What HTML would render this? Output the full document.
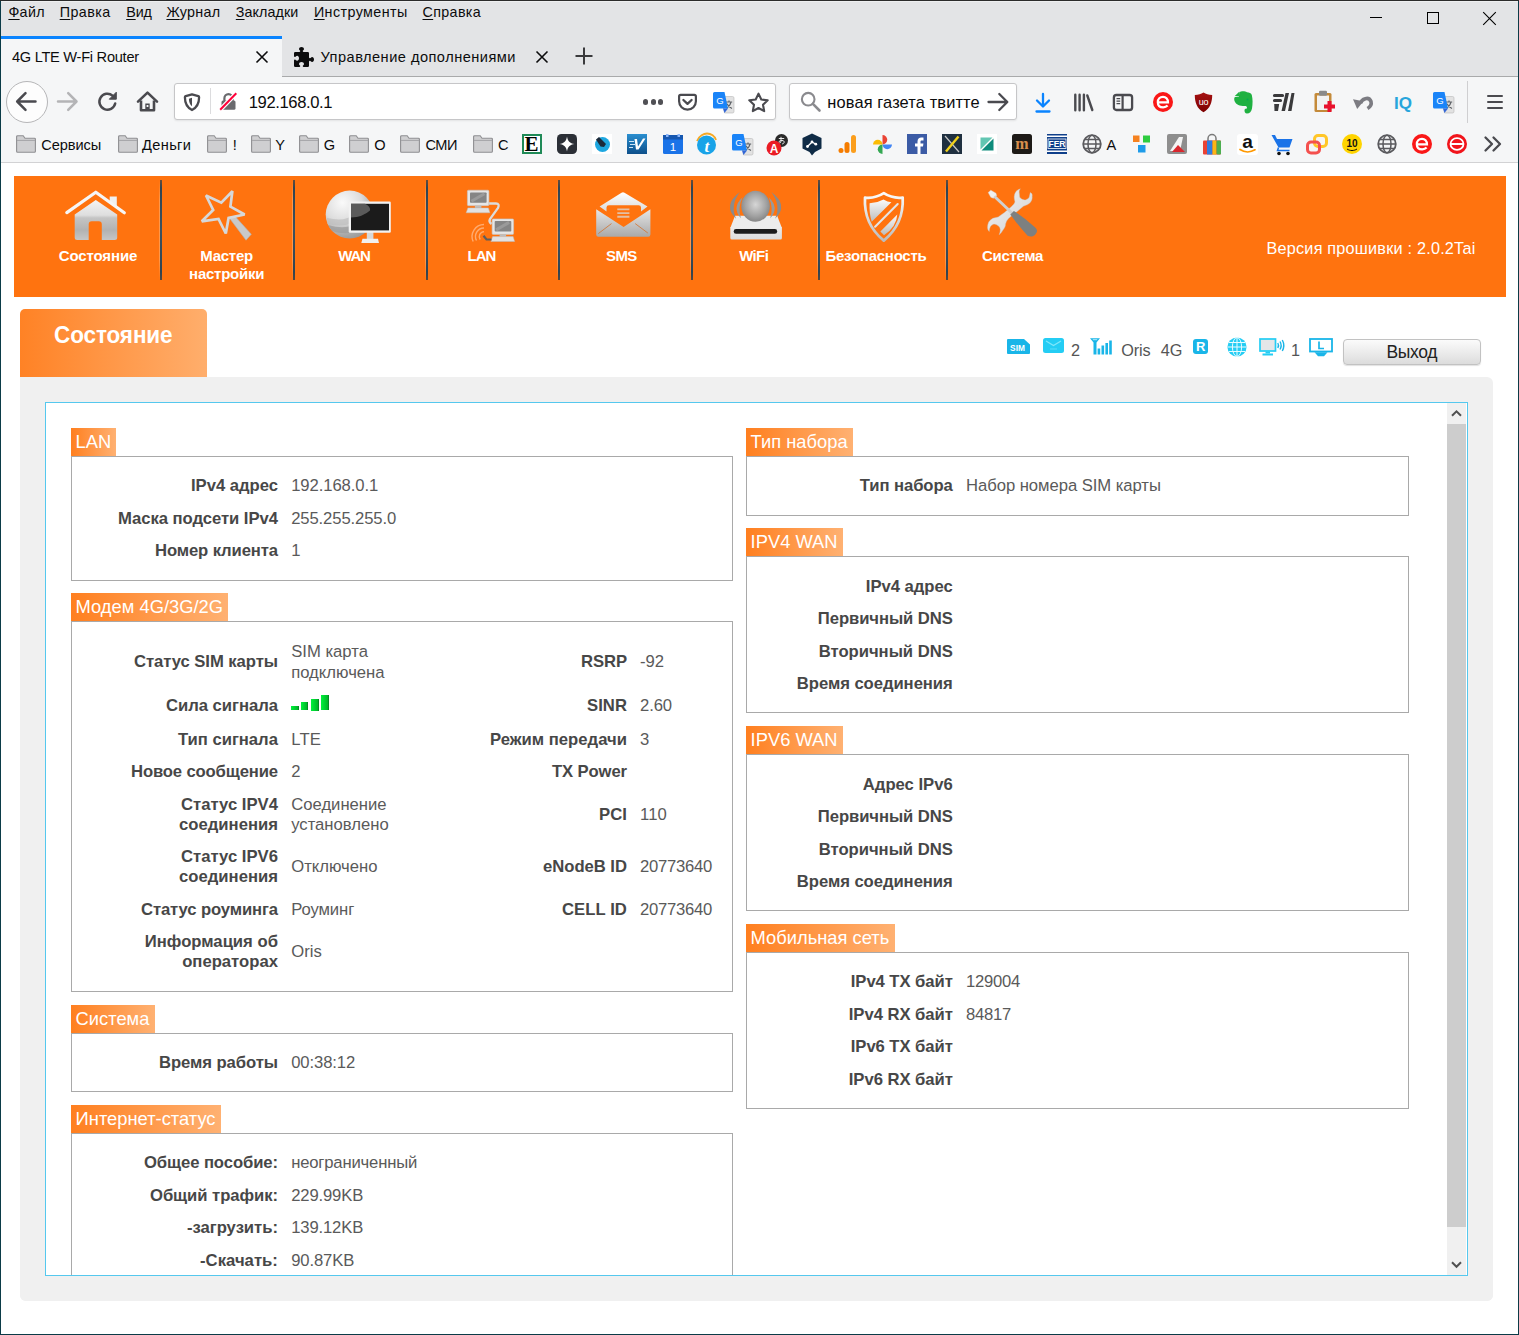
<!DOCTYPE html>
<html lang="ru"><head><meta charset="utf-8"><title>4G LTE W-Fi Router</title>
<style>
html,body{margin:0;padding:0}
body{width:1519px;height:1335px;position:relative;overflow:hidden;background:#fff;font-family:"Liberation Sans",sans-serif}
.a{position:absolute;display:block}
.t{position:absolute;white-space:nowrap;line-height:1;font-family:"Liberation Sans",sans-serif}
svg{overflow:visible}
</style></head><body>
<!-- browser chrome -->
<div class="a" style="left:0px;top:0px;width:1519px;height:77px;background:#e3e4e6;"></div>
<div class="a" style="left:0px;top:0px;width:1519px;height:1px;background:#2b2b2b;"></div>
<div class="a" style="left:0px;top:1px;width:1519px;height:1px;background:#eeeff0;"></div>
<span class="t" style="left:8.40px;top:5px;font-size:14.3px;color:#0c0c0d;letter-spacing:0.336px;"><span style="text-decoration:underline;text-underline-offset:1.500px;text-decoration-thickness:1px">Ф</span>айл</span>
<span class="t" style="left:59.70px;top:5px;font-size:14.3px;color:#0c0c0d;letter-spacing:0.466px;"><span style="text-decoration:underline;text-underline-offset:1.500px;text-decoration-thickness:1px">П</span>равка</span>
<span class="t" style="left:126.20px;top:5px;font-size:14.3px;color:#0c0c0d;letter-spacing:-0.057px;"><span style="text-decoration:underline;text-underline-offset:1.500px;text-decoration-thickness:1px">В</span>ид</span>
<span class="t" style="left:166.40px;top:5px;font-size:14.3px;color:#0c0c0d;letter-spacing:0.303px;"><span style="text-decoration:underline;text-underline-offset:1.500px;text-decoration-thickness:1px">Ж</span>урнал</span>
<span class="t" style="left:235.80px;top:5px;font-size:14.3px;color:#0c0c0d;letter-spacing:0.088px;"><span style="text-decoration:underline;text-underline-offset:1.500px;text-decoration-thickness:1px">З</span>акладки</span>
<span class="t" style="left:313.90px;top:5px;font-size:14.3px;color:#0c0c0d;letter-spacing:0.421px;"><span style="text-decoration:underline;text-underline-offset:1.500px;text-decoration-thickness:1px">И</span>нструменты</span>
<span class="t" style="left:422.50px;top:5px;font-size:14.3px;color:#0c0c0d;letter-spacing:0.358px;"><span style="text-decoration:underline;text-underline-offset:1.500px;text-decoration-thickness:1px">С</span>правка</span>
<div class="a" style="left:1370px;top:17px;width:12px;height:1px;background:#000;"></div>
<div class="a" style="left:1427px;top:12px;width:10px;height:10px;border:1px solid #000"></div>
<svg class="a" style="left:1482px;top:11px" width="15" height="15" viewBox="0 0 15 15"><path d="M1.2 1.2L13.8 13.8M13.8 1.2L1.2 13.8" stroke="#000" stroke-width="1.1" fill="none"/></svg>
<div class="a" style="left:0px;top:76px;width:1519px;height:1px;background:#a9aaab;"></div>
<div class="a" style="left:1px;top:36px;width:281px;height:41px;background:#f5f6f7;"></div>
<div class="a" style="left:1px;top:36px;width:281px;height:3px;background:#0a84ff;"></div>
<span class="t" style="left:11.90px;top:50px;font-size:14.6px;color:#0c0c0d;letter-spacing:-0.261px;">4G LTE W-Fi Router</span>
<svg class="a" style="left:254px;top:49px" width="16" height="16" viewBox="0 0 16 16"><path d="M2.5 2.5L13.5 13.5M13.5 2.5L2.5 13.5" stroke="#0c0c0d" stroke-width="1.600" fill="none"/></svg>
<svg class="a" style="left:294px;top:46.800px" width="20" height="20" viewBox="0 0 16 16"><path fill="#0c0c0d" d="M14.5 8c-.971 0-1 1-1.75 1a.765.765 0 0 1-.75-.75V5a1 1 0 0 0-1-1H7.75A.765.765 0 0 1 7 3.25c0-.75 1-.779 1-1.75C8 .635 7.1 0 6 0S4 .635 4 1.500c0 .971 1 1 1 1.750a.765.765 0 0 1-.75.75H1a1 1 0 0 0-1 1v2.250A.765.765 0 0 0 .75 8c.75 0 .779-1 1.750-1C3.365 7 4 7.900 4 9s-.635 2-1.500 2c-.971 0-1-1-1.750-1a.765.765 0 0 0-.750.750V15a1 1 0 0 0 1 1h3.250a.765.765 0 0 0 .750-.750c0-.750-1-.779-1-1.750 0-.865.900-1.500 2-1.500s2 .635 2 1.500c0 .971-1 1-1 1.750a.765.765 0 0 0 .750.750H11a1 1 0 0 0 1-1v-3.250a.765.765 0 0 1 .750-.750c.750 0 .779 1 1.750 1 .865 0 1.500-.900 1.500-2s-.635-2-1.500-2z"/></svg>
<span class="t" style="left:320.50px;top:50px;font-size:14.6px;color:#0c0c0d;letter-spacing:0.475px;">Управление дополнениями</span>
<svg class="a" style="left:534px;top:49px" width="16" height="16" viewBox="0 0 16 16"><path d="M2.5 2.5L13.5 13.5M13.5 2.5L2.5 13.5" stroke="#0c0c0d" stroke-width="1.600" fill="none"/></svg>
<svg class="a" style="left:574px;top:46px" width="20" height="20" viewBox="0 0 20 20"><path d="M10 1.5V18.5M1.5 10H18.5" stroke="#3a3a3c" stroke-width="2" fill="none"/></svg>
<div class="a" style="left:0px;top:77px;width:1519px;height:50px;background:#f5f6f7;"></div>
<div class="a" style="left:5.5px;top:80.5px;width:40px;height:40px;border-radius:50%;background:#fdfdfd;border:1px solid #b6b6b8"></div>
<svg class="a" style="left:14px;top:89px" width="25" height="25" viewBox="0 0 25 25"><path d="M21.5 12.5H3.5M11.5 4.2L3.2 12.5L11.5 20.8" stroke="#4a4a4f" stroke-width="2.5" fill="none" stroke-linecap="round" stroke-linejoin="round"/></svg>
<svg class="a" style="left:55px;top:89px" width="25" height="25" viewBox="0 0 25 25"><path d="M3 12.5H21M13.2 4.2L21.5 12.5L13.2 20.8" stroke="#b4b4b6" stroke-width="2.5" fill="none" stroke-linecap="round" stroke-linejoin="round"/></svg>
<svg class="a" style="left:95px;top:89px" width="25" height="25" viewBox="0 0 25 25"><path d="M20.2 14.5A8 8 0 1 1 17.6 6.6" stroke="#4a4a4f" stroke-width="2.5" fill="none" stroke-linecap="round"/><path d="M21.3 3.2V10.2H14.3Z" fill="#4a4a4f" stroke="#4a4a4f" stroke-width="1" stroke-linejoin="round"/></svg>
<svg class="a" style="left:135px;top:89px" width="25" height="25" viewBox="0 0 25 25"><path d="M3 12.6L12.5 3.6L22 12.6" stroke="#4a4a4f" stroke-width="2.6" fill="none" stroke-linecap="round" stroke-linejoin="round"/><path d="M6 11.5V21.2H19V11.5" stroke="#4a4a4f" stroke-width="2.6" fill="none" stroke-linejoin="round"/><rect x="10.3" y="14.5" width="4.4" height="6.5" fill="#4a4a4f"/><rect x="11.6" y="16" width="1.8" height="2" fill="#f5f6f7"/></svg>
<div class="a" style="left:174px;top:83px;width:600px;height:35px;background:#fff;border:1px solid #c6c6c8;border-radius:3px;box-shadow:0 1px 2px rgba(0,0,0,.08)"></div>
<svg class="a" style="left:181.500px;top:91.500px" width="20" height="20" viewBox="0 0 20 20"><path d="M10 2.300L16.300 4.100Q17.100 4.400 17.100 5.300C17.100 11.200 14.600 15.800 10 18C5.400 15.800 2.900 11.200 2.900 5.300Q2.900 4.400 3.700 4.100Z" stroke="#4a4a4f" stroke-width="2.300" fill="none" stroke-linejoin="round"/><path d="M10 5.800V14.200C8 12.600 7 10.200 6.900 6.700Z" fill="#4a4a4f"/></svg>
<div class="a" style="left:210px;top:88px;width:1px;height:26px;background:#dcdcde;"></div>
<svg class="a" style="left:218px;top:91px" width="21" height="21" viewBox="0 0 21 21"><path d="M6.400 10V7.200A4.100 4.100 0 0 1 14.600 7.200V10" stroke="#6a6a6e" stroke-width="2.2" fill="none"/><rect x="3.500" y="9.500" width="14" height="9.300" rx="1.500" fill="#6a6a6e"/><path d="M2.200 18.800L18.300 2.200" stroke="#fff" stroke-width="4.500"/><path d="M2.200 18.800L18.300 2.200" stroke="#ff0039" stroke-width="2"/></svg>
<span class="t" style="left:248.70px;top:95px;font-size:16.6px;color:#0c0c0d;letter-spacing:-0.381px;">192.168.0.1</span>
<div class="a" style="left:643.2px;top:99.400px;width:5.200px;height:5.200px;border-radius:50%;background:#505055"></div>
<div class="a" style="left:650.6px;top:99.400px;width:5.200px;height:5.200px;border-radius:50%;background:#505055"></div>
<div class="a" style="left:658.0px;top:99.400px;width:5.200px;height:5.200px;border-radius:50%;background:#505055"></div>
<svg class="a" style="left:677px;top:91.5px" width="21" height="21" viewBox="0 0 21 21"><path d="M3.600 2.900H17.400A1.500 1.500 0 0 1 18.900 4.400V9.300A8.400 8.400 0 0 1 2.100 9.300V4.400A1.500 1.500 0 0 1 3.600 2.900Z" stroke="#4a4a4f" stroke-width="2.200" fill="none"/><path d="M6.400 8L10.500 11.900L14.600 8" stroke="#4a4a4f" stroke-width="2.300" fill="none" stroke-linecap="round" stroke-linejoin="round"/></svg>
<svg class="a" style="left:712px;top:91px" width="23" height="23" viewBox="0 0 23 23"><path d="M9.500 5.500H20.500A1.500 1.500 0 0 1 22 7V20.500A1.500 1.500 0 0 1 20.500 22H12.500Z" fill="#e2e2e2" stroke="#b9b9b9" stroke-width=".600"/><path d="M13.800 11H20.200M17 9.500V11M19 11C18.500 13.500 16.500 16 14.500 17.200M15 12.800C16 15 17.800 16.500 20 17.500" stroke="#5f6368" stroke-width="1.200" fill="none"/><path d="M2.500 1H12.500L16 17.500H2.500A1.500 1.500 0 0 1 1 16V2.500A1.500 1.500 0 0 1 2.500 1Z" fill="#1a84f8"/><path d="M12.500 22L16 17.500H11Z" fill="#3367d6"/><text x="8" y="12.500" font-family="Liberation Sans" font-size="9.500" fill="#fff" text-anchor="middle">G</text></svg>
<svg class="a" style="left:746.5px;top:90.5px" width="23" height="23" viewBox="0 0 23 23"><path d="M11.500 2.600L14.300 8.500L20.700 9.300L16 13.700L17.200 20.100L11.500 17L5.800 20.100L7 13.700L2.300 9.300L8.700 8.500Z" stroke="#4a4a4f" stroke-width="2.100" fill="none" stroke-linejoin="round"/></svg>
<div class="a" style="left:789px;top:83px;width:226px;height:35px;background:#fff;border:1px solid #c6c6c8;border-radius:3px;box-shadow:0 1px 2px rgba(0,0,0,.08)"></div>
<svg class="a" style="left:799px;top:90px" width="23" height="23" viewBox="0 0 23 23"><circle cx="9.200" cy="9.200" r="6.300" stroke="#8a8a8e" stroke-width="2.100" fill="none"/><path d="M13.900 13.900L20.500 20.500" stroke="#8a8a8e" stroke-width="2.600" stroke-linecap="round"/></svg>
<span class="t" style="left:827.30px;top:94px;font-size:16.4px;color:#0c0c0d;letter-spacing:0.132px;">новая газета твитте</span>
<svg class="a" style="left:986px;top:90px" width="24" height="24" viewBox="0 0 24 24"><path d="M2.500 12H21M13.300 4L21.300 12L13.300 20" stroke="#4a4a4f" stroke-width="2.300" fill="none" stroke-linecap="round" stroke-linejoin="round"/></svg>
<svg class="a" style="left:1031px;top:90px" width="24" height="24" viewBox="0 0 24 24"><path d="M12 4V16.500M6 10.500L12 16.500L18 10.500M5.500 21.500H18.500" stroke="#0a84ff" stroke-width="2.300" fill="none" stroke-linecap="round" stroke-linejoin="round"/></svg>
<svg class="a" style="left:1072px;top:90px" width="24" height="24" viewBox="0 0 24 24"><path d="M3.300 4.800V20.200M7.600 4.800V20.200M11.900 4.800V20.200M15.300 5.500L20.300 20" stroke="#4a4a4f" stroke-width="2.400" fill="none" stroke-linecap="round"/></svg>
<svg class="a" style="left:1111px;top:90px" width="24" height="24" viewBox="0 0 24 24"><rect x="2.900" y="5" width="18.200" height="15" rx="2.500" stroke="#4a4a4f" stroke-width="2.300" fill="none"/><path d="M11.600 5V20" stroke="#4a4a4f" stroke-width="2.200"/><path d="M5.500 8.700H9.200M5.500 11.200H9.200M5.500 13.700H9.200" stroke="#4a4a4f" stroke-width="1.300"/></svg>
<svg class="a" style="left:1152.5px;top:91.5px" width="20" height="20" viewBox="0 0 20 20"><circle cx="10" cy="10" r="10" fill="#fa1717"/><path d="M5 10.400H15C15 6.800 12.800 4.800 10 4.800C7 4.800 4.800 7 4.800 10.200C4.800 13.400 7 15.400 10.200 15.400C12 15.400 13.500 14.800 14.600 13.600" stroke="#fff" stroke-width="2.200" fill="none"/></svg>
<svg class="a" style="left:1193.500px;top:91.500px" width="19" height="21" viewBox="0 0 19 21"><defs><linearGradient id="ubg" x1="0" y1="0" x2="0" y2="1"><stop offset="0" stop-color="#a51212"/><stop offset="1" stop-color="#7c0000"/></linearGradient></defs><path d="M9.500 .500C7 2.200 4.500 2.800 .800 3C.800 10.500 3 16.500 9.500 20.300C16 16.500 18.200 10.500 18.200 3C14.500 2.800 12 2.200 9.500 .500Z" fill="url(#ubg)"/><text x="9.500" y="12.500" font-family="Liberation Sans" font-size="9" fill="#fff" text-anchor="middle" letter-spacing="-.300">uo</text></svg>
<svg class="a" style="left:1232px;top:89.500px" width="23" height="25" viewBox="0 0 23 25"><path d="M7.500 2C9 1 13 .8 15 2.200C17 2.400 19.300 3 19.800 5C20.800 9 20.800 14 20 18.500C19.500 21.500 17.500 23.500 15 23.500C13 23.500 12.500 22 12.500 20.500C12.500 19 13.500 18.200 15 18.500C15 16.500 14.500 16 12.500 16C8 16 4 15 2.500 11C2 9 2.200 7.500 3 7L7 6.500Z M2.800 6L7.200 1.800V6Z" fill="#1fb141"/><circle cx="15.500" cy="9.500" r="1" fill="#0a5"/></svg>
<svg class="a" style="left:1272px;top:90px" width="24" height="24" viewBox="0 0 24 24"><path d="M2.500 5.500H10.500M2.500 10.500H8.500" stroke="#3a3a3c" stroke-width="3.200" stroke-linecap="round"/><path d="M2.200 14H7.200L6 21H2.500Z" fill="#3a3a3c"/><path d="M13.500 3H17L13 21H9.500Z M19.500 3H22.500L19.500 21H16Z" fill="#3a3a3c"/></svg>
<svg class="a" style="left:1311.500px;top:89px" width="25" height="26" viewBox="0 0 25 26"><rect x="2.500" y="4" width="17" height="19" rx="1.500" fill="#c48a3a"/><rect x="5" y="6.500" width="12" height="14.500" fill="#f2f2f2"/><rect x="7" y="1.800" width="8" height="5" rx="1.200" fill="#8a8a8a"/><path d="M12 17.500H23M17.500 12V23" stroke="#e8112d" stroke-width="4"/></svg>
<svg class="a" style="left:1353px;top:94.500px" width="21" height="15" viewBox="0 0 21 15"><path d="M7.500 8.500C8.500 3.500 16 1.200 18 6.500C18.800 9.500 17 12 14.500 13.500" stroke="#7c7c82" stroke-width="3.600" fill="none"/><path d="M0 4.200L10.500 6.300L4.200 14Z" fill="#7c7c82"/></svg>
<span class="t" style="left:1394.03px;top:95px;font-size:17px;font-weight:bold;color:#27a5dc;">IQ</span>
<svg class="a" style="left:1432px;top:91px" width="23" height="23" viewBox="0 0 23 23"><path d="M9.500 5.500H20.500A1.500 1.500 0 0 1 22 7V20.500A1.500 1.500 0 0 1 20.500 22H12.500Z" fill="#e2e2e2" stroke="#b9b9b9" stroke-width=".600"/><path d="M13.800 11H20.200M17 9.500V11M19 11C18.500 13.500 16.500 16 14.500 17.200M15 12.800C16 15 17.800 16.500 20 17.500" stroke="#5f6368" stroke-width="1.200" fill="none"/><path d="M2.500 1H12.500L16 17.500H2.500A1.500 1.500 0 0 1 1 16V2.500A1.500 1.500 0 0 1 2.500 1Z" fill="#1a84f8"/><path d="M12.500 22L16 17.500H11Z" fill="#3367d6"/><text x="8" y="12.500" font-family="Liberation Sans" font-size="9.500" fill="#fff" text-anchor="middle">G</text></svg>
<div class="a" style="left:1467px;top:81px;width:1px;height:42px;background:#cfcfd1;"></div>
<div class="a" style="left:1486.5px;top:94.5px;width:16px;height:2.2px;background:#4a4a4f;border-radius:1px;"></div>
<div class="a" style="left:1486.5px;top:100.5px;width:16px;height:2.2px;background:#4a4a4f;border-radius:1px;"></div>
<div class="a" style="left:1486.5px;top:106.5px;width:16px;height:2.2px;background:#4a4a4f;border-radius:1px;"></div>
<!-- bookmarks -->
<div class="a" style="left:0px;top:127px;width:1519px;height:35px;background:#f5f6f7;"></div>
<div class="a" style="left:0px;top:162px;width:1519px;height:1px;background:#d2d2d4;"></div>
<svg class="a" style="left:16px;top:135px" width="20" height="18" viewBox="0 0 20 18"><path d="M1.600 .700H7.200L9 3.200H18.400A1 1 0 0 1 19.400 4.200V16.300A1 1 0 0 1 18.400 17.300H1.600A1 1 0 0 1 .600 16.300V1.700A1 1 0 0 1 1.600 .700Z" fill="#cfcfd1" stroke="#8f8f92" stroke-width="1.100"/><path d="M1 5.400H19" stroke="#a4a4a7" stroke-width="1"/></svg>
<span class="t" style="left:41.20px;top:138px;font-size:14.6px;color:#0c0c0d;letter-spacing:-0.056px;">Сервисы</span>
<svg class="a" style="left:117.5px;top:135px" width="20" height="18" viewBox="0 0 20 18"><path d="M1.600 .700H7.200L9 3.200H18.400A1 1 0 0 1 19.400 4.200V16.300A1 1 0 0 1 18.400 17.300H1.600A1 1 0 0 1 .600 16.300V1.700A1 1 0 0 1 1.600 .700Z" fill="#cfcfd1" stroke="#8f8f92" stroke-width="1.100"/><path d="M1 5.400H19" stroke="#a4a4a7" stroke-width="1"/></svg>
<span class="t" style="left:142.00px;top:138px;font-size:14.6px;color:#0c0c0d;letter-spacing:0.357px;">Деньги</span>
<svg class="a" style="left:207px;top:135px" width="20" height="18" viewBox="0 0 20 18"><path d="M1.600 .700H7.200L9 3.200H18.400A1 1 0 0 1 19.400 4.200V16.300A1 1 0 0 1 18.400 17.300H1.600A1 1 0 0 1 .600 16.300V1.700A1 1 0 0 1 1.600 .700Z" fill="#cfcfd1" stroke="#8f8f92" stroke-width="1.100"/><path d="M1 5.400H19" stroke="#a4a4a7" stroke-width="1"/></svg>
<span class="t" style="left:232.70px;top:138px;font-size:14.6px;color:#0c0c0d;">!</span>
<svg class="a" style="left:250.8px;top:135px" width="20" height="18" viewBox="0 0 20 18"><path d="M1.600 .700H7.200L9 3.200H18.400A1 1 0 0 1 19.400 4.200V16.300A1 1 0 0 1 18.400 17.300H1.600A1 1 0 0 1 .600 16.300V1.700A1 1 0 0 1 1.600 .700Z" fill="#cfcfd1" stroke="#8f8f92" stroke-width="1.100"/><path d="M1 5.400H19" stroke="#a4a4a7" stroke-width="1"/></svg>
<span class="t" style="left:275.20px;top:138px;font-size:14.6px;color:#0c0c0d;">Y</span>
<svg class="a" style="left:298.8px;top:135px" width="20" height="18" viewBox="0 0 20 18"><path d="M1.600 .700H7.200L9 3.200H18.400A1 1 0 0 1 19.400 4.200V16.300A1 1 0 0 1 18.400 17.300H1.600A1 1 0 0 1 .600 16.300V1.700A1 1 0 0 1 1.600 .700Z" fill="#cfcfd1" stroke="#8f8f92" stroke-width="1.100"/><path d="M1 5.400H19" stroke="#a4a4a7" stroke-width="1"/></svg>
<span class="t" style="left:323.80px;top:138px;font-size:14.6px;color:#0c0c0d;">G</span>
<svg class="a" style="left:348.8px;top:135px" width="20" height="18" viewBox="0 0 20 18"><path d="M1.600 .700H7.200L9 3.200H18.400A1 1 0 0 1 19.400 4.200V16.300A1 1 0 0 1 18.400 17.300H1.600A1 1 0 0 1 .600 16.300V1.700A1 1 0 0 1 1.600 .700Z" fill="#cfcfd1" stroke="#8f8f92" stroke-width="1.100"/><path d="M1 5.400H19" stroke="#a4a4a7" stroke-width="1"/></svg>
<span class="t" style="left:374.30px;top:138px;font-size:14.6px;color:#0c0c0d;">O</span>
<svg class="a" style="left:400px;top:135px" width="20" height="18" viewBox="0 0 20 18"><path d="M1.600 .700H7.200L9 3.200H18.400A1 1 0 0 1 19.400 4.200V16.300A1 1 0 0 1 18.400 17.300H1.600A1 1 0 0 1 .600 16.300V1.700A1 1 0 0 1 1.600 .700Z" fill="#cfcfd1" stroke="#8f8f92" stroke-width="1.100"/><path d="M1 5.400H19" stroke="#a4a4a7" stroke-width="1"/></svg>
<span class="t" style="left:425.50px;top:138px;font-size:14.6px;color:#0c0c0d;letter-spacing:-0.512px;">СМИ</span>
<svg class="a" style="left:472.5px;top:135px" width="20" height="18" viewBox="0 0 20 18"><path d="M1.600 .700H7.200L9 3.200H18.400A1 1 0 0 1 19.400 4.200V16.300A1 1 0 0 1 18.400 17.300H1.600A1 1 0 0 1 .600 16.300V1.700A1 1 0 0 1 1.600 .700Z" fill="#cfcfd1" stroke="#8f8f92" stroke-width="1.100"/><path d="M1 5.400H19" stroke="#a4a4a7" stroke-width="1"/></svg>
<span class="t" style="left:498.00px;top:138px;font-size:14.6px;color:#0c0c0d;">С</span>
<div class="a" style="left:522px;top:134px;width:16px;height:16px;border:2px solid #1f8a57;background:#fff"></div>
<span class="t" style="left:524.500px;top:132.5px;font-family:'Liberation Serif',serif;font-weight:bold;font-size:21px;line-height:22px;color:#000">E</span>
<svg class="a" style="left:557px;top:134px" width="20" height="20" viewBox="0 0 20 20"><rect width="20" height="20" rx="4.500" fill="#2b2f36"/><path d="M10 2.500C10.600 7 13 9.400 17.500 10C13 10.600 10.600 13 10 17.500C9.400 13 7 10.600 2.500 10C7 9.400 9.400 7 10 2.500Z" fill="#fff"/></svg>
<svg class="a" style="left:592px;top:134px" width="20" height="20" viewBox="0 0 20 20"><rect width="20" height="20" fill="#fff"/><circle cx="10.500" cy="10.500" r="7.500" fill="#1ea7e0"/><path d="M4 5.500L7 3L14 10L12 13L8.500 12.500Z" fill="#1c2a3a"/></svg>
<svg class="a" style="left:627px;top:134px" width="20" height="20" viewBox="0 0 20 20"><defs><linearGradient id="vb" x1="0" y1="0" x2="0" y2="1"><stop offset="0" stop-color="#2a8fd0"/><stop offset="1" stop-color="#0d4f8a"/></linearGradient></defs><rect width="20" height="20" fill="url(#vb)"/><path d="M7.500 5H10L11 12.500L16 4.500H18.500L11.500 15.500H9Z" fill="#fff"/><path d="M2 7.500H7M3 10.500H8M2 13.500H6" stroke="#cfe6f7" stroke-width="1.200"/></svg>
<svg class="a" style="left:662.500px;top:134px" width="20" height="20" viewBox="0 0 20 20"><rect y="1" width="20" height="19" rx="1.500" fill="#1a73e8"/><rect y="1" width="20" height="4.500" fill="#1557b0"/><rect x="3" width="2.500" height="3" fill="#8ab4f8"/><rect x="14.500" width="2.500" height="3" fill="#8ab4f8"/><text x="10" y="16.500" font-family="Liberation Sans" font-size="11.500" fill="#fff" text-anchor="middle">1</text></svg>
<svg class="a" style="left:696px;top:133px" width="21" height="22" viewBox="0 0 21 22"><path d="M1 8C3 2.500 8 .500 11 .500C15 .500 19 3 20 7" stroke="#f7a823" stroke-width="1.800" fill="none"/><circle cx="10.500" cy="12" r="9.500" fill="#19a3e8"/><text x="10.800" y="18.500" font-family="Liberation Serif" font-style="italic" font-weight="bold" font-size="17" fill="#fff" text-anchor="middle">t</text></svg>
<svg class="a" style="left:730.5px;top:132.5px" width="23" height="23" viewBox="0 0 23 23"><path d="M9.500 5.500H20.500A1.500 1.500 0 0 1 22 7V20.500A1.500 1.500 0 0 1 20.500 22H12.500Z" fill="#e2e2e2" stroke="#b9b9b9" stroke-width=".600"/><path d="M13.800 11H20.200M17 9.500V11M19 11C18.500 13.500 16.500 16 14.500 17.200M15 12.800C16 15 17.800 16.500 20 17.500" stroke="#5f6368" stroke-width="1.200" fill="none"/><path d="M2.500 1H12.500L16 17.500H2.500A1.500 1.500 0 0 1 1 16V2.500A1.500 1.500 0 0 1 2.500 1Z" fill="#1a84f8"/><path d="M12.500 22L16 17.500H11Z" fill="#3367d6"/><text x="8" y="12.500" font-family="Liberation Sans" font-size="9.500" fill="#fff" text-anchor="middle">G</text></svg>
<svg class="a" style="left:766px;top:133px" width="23" height="23" viewBox="0 0 23 23"><circle cx="15.500" cy="7.500" r="6.500" fill="#2a2a2a"/><path d="M12.800 5.500H18.200M15 3.800V8C15 10 13.300 10.800 12.800 9.500C12.500 8 15.500 6.800 17.500 7.800C19 9 17.800 10.800 16.200 11" stroke="#fff" stroke-width=".900" fill="none"/><circle cx="8" cy="15" r="7.500" fill="#ea1c24"/><text x="8" y="19.500" font-family="Liberation Sans" font-weight="bold" font-size="12" fill="#fff" text-anchor="middle">A</text></svg>
<svg class="a" style="left:801px;top:133px" width="22" height="23" viewBox="0 0 22 23"><path d="M11 .500L20.500 5V15.500L14 19L11 22.500L8.500 19L1.500 15.500V5Z" fill="#0f2b46"/><path d="M6.500 13.500L11 9L14.500 11" stroke="#fff" stroke-width="1.400" fill="none"/><circle cx="6.500" cy="13.500" r="1.400" fill="#fff"/><circle cx="11" cy="9" r="1.400" fill="#fff"/><circle cx="14.800" cy="11.200" r="1.400" fill="#fff"/></svg>
<svg class="a" style="left:838px;top:134px" width="20" height="20" viewBox="0 0 20 20"><rect x="13" y="1" width="5" height="18" rx="2.500" fill="#fb9e1c"/><rect x="6.500" y="8" width="5" height="11" rx="2.500" fill="#f57c00"/><circle cx="3" cy="16.500" r="2.500" fill="#f57c00"/></svg>
<svg class="a" style="left:871.500px;top:133.5px" width="21" height="21" viewBox="0 0 21 21"><path d="M10.500 1A4.750 4.750 0 0 1 10.500 10.500Z" fill="#ea4335"/><path d="M20 10.500A4.750 4.750 0 0 1 10.500 10.500Z" fill="#4285f4"/><path d="M10.500 20A4.750 4.750 0 0 1 10.500 10.500Z" fill="#34a853"/><path d="M1 10.500A4.750 4.750 0 0 1 10.500 10.500Z" fill="#fbbc04"/></svg>
<svg class="a" style="left:907px;top:134px" width="20" height="20" viewBox="0 0 20 20"><rect width="20" height="20" fill="#3b5ba5"/><path d="M13.500 20V12.500H16L16.400 9.500H13.500V7.800C13.500 6.900 13.800 6.400 15 6.400H16.500V3.700C16.200 3.700 15.300 3.600 14.300 3.600C12.100 3.600 10.500 5 10.500 7.500V9.500H8V12.500H10.500V20Z" fill="#fff"/></svg>
<svg class="a" style="left:942px;top:134px" width="20" height="20" viewBox="0 0 20 20"><rect width="20" height="20" fill="#1f3040"/><path d="M3 2L17 18" stroke="#c9c9c9" stroke-width="1.200"/><path d="M16.500 2.500L4 17.500" stroke="#f2d21b" stroke-width="2.400"/></svg>
<svg class="a" style="left:977px;top:134px" width="20" height="20" viewBox="0 0 20 20"><rect width="20" height="20" fill="#fff"/><path d="M3.500 3.500H15.500L3.500 15.500Z" fill="#62c6b2"/><path d="M16.500 4.500V16.500H4.500Z" fill="#0f8c7c"/></svg>
<svg class="a" style="left:1012px;top:134px" width="20" height="20" viewBox="0 0 20 20"><rect width="20" height="20" rx="2.500" fill="#1d1a17"/><text x="10" y="14.500" font-family="Liberation Serif" font-weight="bold" font-size="16" fill="#d88f4e" text-anchor="middle">m</text></svg>
<svg class="a" style="left:1047px;top:134px" width="20" height="20" viewBox="0 0 20 20"><rect width="20" height="20" fill="#0f3f8a"/><rect y="1.500" width="20" height="1.500" fill="#fff"/><rect y="16.500" width="20" height="1.500" fill="#fff"/><rect x="1" y="5" width="18" height="9.500" fill="#0f3f8a" stroke="#fff" stroke-width=".800"/><text x="10" y="13" font-family="Liberation Sans" font-weight="bold" font-size="8.500" fill="#fff" text-anchor="middle">FER</text></svg>
<svg class="a" style="left:1081.5px;top:134px" width="20" height="20" viewBox="0 0 20 20"><circle cx="10" cy="10" r="8.800" stroke="#5a5a5e" stroke-width="1.800" fill="none"/><ellipse cx="10" cy="10" rx="4" ry="8.800" stroke="#5a5a5e" stroke-width="1.500" fill="none"/><path d="M1.500 10H18.500M2.800 5.500H17.200M2.800 14.500H17.200" stroke="#5a5a5e" stroke-width="1.400"/></svg>
<span class="t" style="left:1106.50px;top:138px;font-size:14.6px;color:#0c0c0d;">A</span>
<svg class="a" style="left:1132px;top:134px" width="20" height="20" viewBox="0 0 20 20"><rect x="1" y="1.500" width="6.500" height="6.500" fill="#f58220"/><rect x="11" y="1.500" width="7" height="7" fill="#2ecc40"/><rect x="6" y="11" width="7.500" height="7.500" fill="#1e9be9"/></svg>
<svg class="a" style="left:1167px;top:134px" width="20" height="20" viewBox="0 0 20 20"><rect width="20" height="20" rx="2" fill="#8e8e8e"/><path d="M3 17L12 3H16L13 17Z" fill="#f4f4f4"/><path d="M5 18L11 11L18 18Z" fill="#d9272e"/></svg>
<svg class="a" style="left:1202px;top:132.5px" width="20" height="22" viewBox="0 0 20 22"><path d="M6 8V5.500A4 4 0 0 1 14 5.500V8" stroke="#7a7a7a" stroke-width="1.500" fill="none"/><rect x="1" y="7.500" width="18" height="14" rx="1" fill="#e94235"/><rect x="5" y="7.500" width="5.500" height="14" fill="#2f7de1"/><rect x="10.500" y="7.500" width="4" height="14" fill="#fbb614"/><rect x="14.500" y="7.500" width="4.500" height="14" rx="1" fill="#4caf50"/></svg>
<svg class="a" style="left:1237px;top:134px" width="21" height="21" viewBox="0 0 21 21"><rect width="21" height="21" rx="3" fill="#fff"/><text x="10.500" y="13.500" font-family="Liberation Sans" font-weight="bold" font-size="19" fill="#111" text-anchor="middle">a</text><path d="M3 15.500C7.500 18.500 13.500 18.500 18 15.800" stroke="#f90" stroke-width="1.700" fill="none" stroke-linecap="round"/></svg>
<svg class="a" style="left:1271px;top:133px" width="23" height="23" viewBox="0 0 23 23"><path d="M.500 2H4L6 6H21.500L18.500 14.500H7.500Z" fill="#1a73e8"/><path d="M7.500 14.500L6.500 17.500H18.500" stroke="#1a73e8" stroke-width="1.500" fill="none"/><circle cx="8" cy="20.500" r="1.800" fill="#111"/><circle cx="17" cy="20.500" r="1.800" fill="#111"/></svg>
<svg class="a" style="left:1306px;top:133.5px" width="22" height="21" viewBox="0 0 22 21"><rect x="8.500" y="1.500" width="12" height="11" rx="3.500" stroke="#ffc629" stroke-width="3" fill="none"/><rect x="1.500" y="8" width="12" height="11" rx="3.500" stroke="#f4504e" stroke-width="3" fill="none"/></svg>
<svg class="a" style="left:1341.500px;top:134px" width="20" height="20" viewBox="0 0 20 20"><circle cx="10" cy="10" r="10" fill="#ffd400"/><text x="10" y="13.200" font-family="Liberation Sans" font-weight="bold" font-size="10" fill="#111" text-anchor="middle">10</text><path d="M5 15C8 17 12 17 15 15" stroke="#111" stroke-width="1" fill="none"/></svg>
<svg class="a" style="left:1377px;top:134px" width="20" height="20" viewBox="0 0 20 20"><circle cx="10" cy="10" r="8.800" stroke="#5a5a5e" stroke-width="1.800" fill="none"/><ellipse cx="10" cy="10" rx="4" ry="8.800" stroke="#5a5a5e" stroke-width="1.500" fill="none"/><path d="M1.500 10H18.500M2.800 5.500H17.200M2.800 14.500H17.200" stroke="#5a5a5e" stroke-width="1.400"/></svg>
<svg class="a" style="left:1411.5px;top:134px" width="20" height="20" viewBox="0 0 20 20"><circle cx="10" cy="10" r="10" fill="#fa1717"/><path d="M5 10.400H15C15 6.800 12.800 4.800 10 4.800C7 4.800 4.800 7 4.800 10.200C4.800 13.400 7 15.400 10.200 15.400C12 15.400 13.500 14.800 14.600 13.600" stroke="#fff" stroke-width="2.200" fill="none"/></svg>
<svg class="a" style="left:1446.500px;top:134px" width="20" height="20" viewBox="0 0 20 20"><circle cx="10" cy="10" r="10" fill="#f1141b"/><ellipse cx="10" cy="10" rx="6.500" ry="5.800" stroke="#fff" stroke-width="1.800" fill="none"/><path d="M3.500 10H16.500" stroke="#fff" stroke-width="2"/></svg>
<svg class="a" style="left:1483px;top:134px" width="20" height="20" viewBox="0 0 20 20"><path d="M2.500 3.500L9 10L2.500 16.500M10.500 3.500L17 10L10.500 16.500" stroke="#4a4a4f" stroke-width="2.300" fill="none" stroke-linecap="round" stroke-linejoin="round"/></svg>
<!-- page nav -->
<div class="a" style="left:14px;top:176px;width:1492px;height:121px;background:#ff730f;"></div>
<div class="a" style="left:159px;top:180px;width:1px;height:100px;background:linear-gradient(to bottom,rgba(255,170,110,0),rgba(255,180,120,.550) 20%,rgba(255,180,120,.550) 80%,rgba(255,170,110,0))"></div>
<div class="a" style="left:160px;top:180px;width:2px;height:100px;background:linear-gradient(to bottom,rgba(40,60,75,.700),#2f4452 8%,#3c5260 50%,#2f4452 92%,rgba(40,60,75,.800))"></div>
<div class="a" style="left:292px;top:180px;width:1px;height:100px;background:linear-gradient(to bottom,rgba(255,170,110,0),rgba(255,180,120,.550) 20%,rgba(255,180,120,.550) 80%,rgba(255,170,110,0))"></div>
<div class="a" style="left:293px;top:180px;width:2px;height:100px;background:linear-gradient(to bottom,rgba(40,60,75,.700),#2f4452 8%,#3c5260 50%,#2f4452 92%,rgba(40,60,75,.800))"></div>
<div class="a" style="left:424.5px;top:180px;width:1px;height:100px;background:linear-gradient(to bottom,rgba(255,170,110,0),rgba(255,180,120,.550) 20%,rgba(255,180,120,.550) 80%,rgba(255,170,110,0))"></div>
<div class="a" style="left:425.5px;top:180px;width:2px;height:100px;background:linear-gradient(to bottom,rgba(40,60,75,.700),#2f4452 8%,#3c5260 50%,#2f4452 92%,rgba(40,60,75,.800))"></div>
<div class="a" style="left:557px;top:180px;width:1px;height:100px;background:linear-gradient(to bottom,rgba(255,170,110,0),rgba(255,180,120,.550) 20%,rgba(255,180,120,.550) 80%,rgba(255,170,110,0))"></div>
<div class="a" style="left:558px;top:180px;width:2px;height:100px;background:linear-gradient(to bottom,rgba(40,60,75,.700),#2f4452 8%,#3c5260 50%,#2f4452 92%,rgba(40,60,75,.800))"></div>
<div class="a" style="left:689.5px;top:180px;width:1px;height:100px;background:linear-gradient(to bottom,rgba(255,170,110,0),rgba(255,180,120,.550) 20%,rgba(255,180,120,.550) 80%,rgba(255,170,110,0))"></div>
<div class="a" style="left:690.5px;top:180px;width:2px;height:100px;background:linear-gradient(to bottom,rgba(40,60,75,.700),#2f4452 8%,#3c5260 50%,#2f4452 92%,rgba(40,60,75,.800))"></div>
<div class="a" style="left:816.5px;top:180px;width:1px;height:100px;background:linear-gradient(to bottom,rgba(255,170,110,0),rgba(255,180,120,.550) 20%,rgba(255,180,120,.550) 80%,rgba(255,170,110,0))"></div>
<div class="a" style="left:817.5px;top:180px;width:2px;height:100px;background:linear-gradient(to bottom,rgba(40,60,75,.700),#2f4452 8%,#3c5260 50%,#2f4452 92%,rgba(40,60,75,.800))"></div>
<div class="a" style="left:944.5px;top:180px;width:1px;height:100px;background:linear-gradient(to bottom,rgba(255,170,110,0),rgba(255,180,120,.550) 20%,rgba(255,180,120,.550) 80%,rgba(255,170,110,0))"></div>
<div class="a" style="left:945.5px;top:180px;width:2px;height:100px;background:linear-gradient(to bottom,rgba(40,60,75,.700),#2f4452 8%,#3c5260 50%,#2f4452 92%,rgba(40,60,75,.800))"></div>
<span class="t" style="left:58.70px;top:248px;font-size:15px;font-weight:bold;color:#fff;letter-spacing:-0.114px;">Состояние</span>
<span class="t" style="left:338.25px;top:248px;font-size:15px;font-weight:bold;color:#fff;letter-spacing:-1.165px;">WAN</span>
<span class="t" style="left:467.60px;top:248px;font-size:15px;font-weight:bold;color:#fff;letter-spacing:-1.076px;">LAN</span>
<span class="t" style="left:606.00px;top:248px;font-size:15px;font-weight:bold;color:#fff;letter-spacing:-0.568px;">SMS</span>
<span class="t" style="left:739.20px;top:248px;font-size:15px;font-weight:bold;color:#fff;letter-spacing:-0.631px;">WiFi</span>
<span class="t" style="left:825.50px;top:248px;font-size:15px;font-weight:bold;color:#fff;letter-spacing:-0.254px;">Безопасность</span>
<span class="t" style="left:982.10px;top:248px;font-size:15px;font-weight:bold;color:#fff;letter-spacing:-0.304px;">Система</span>
<span class="t" style="left:200.35px;top:248px;font-size:15px;font-weight:bold;color:#fff;letter-spacing:-0.286px;">Мастер</span>
<span class="t" style="left:189.10px;top:266px;font-size:15px;font-weight:bold;color:#fff;letter-spacing:-0.263px;">настройки</span>
<span class="t" style="left:1266.50px;top:240px;font-size:16.25px;color:#fff;letter-spacing:0.204px;">Версия прошивки : 2.0.2Tai</span>
<svg class="a" style="left:55px;top:182px" width="80" height="64" viewBox="0 0 80 64"><defs><linearGradient id="hg" x1="0" y1="0" x2="0" y2="1"><stop offset="0" stop-color="#f4f4f4"/><stop offset=".380" stop-color="#dedede"/><stop offset=".450" stop-color="#c4c4c4"/><stop offset=".750" stop-color="#b2b2b2"/><stop offset="1" stop-color="#c6c6c6"/></linearGradient></defs><path d="M54.700 14.500H61.800V25L54.700 19Z" fill="#f0f0f0"/><path d="M11.800 30.600L40.800 10.200L69.300 30.800" stroke="#f6f6f6" stroke-width="3.200" fill="none" stroke-linecap="round" stroke-linejoin="round"/><path d="M40.800 17.900L62.200 32.600V55.500Q62.200 58 59.700 58H46.800V42.200Q46.800 39.200 43.800 39.200H36.700Q33.700 39.200 33.700 42.200V58H22.200Q19.700 58 19.700 55.500V32.600Z" fill="url(#hg)"/></svg>
<svg class="a" style="left:185px;top:182px" width="80" height="64" viewBox="0 0 80 64"><path d="M44.500 36.200L50.500 34.800L66.300 52.300L61 58.200Z" fill="#c9c9c9" stroke="#aeaeae" stroke-width=".600"/><path d="M21 13.500L36.300 20.600L47.400 9.200L45.400 24.600L59.600 32.500L43.600 36L40.800 51.500L33.500 37L16.800 39.300L28.200 28Z" stroke="#d6d8da" stroke-width="2.700" fill="none" stroke-linejoin="miter" stroke-miterlimit="2.200"/></svg>
<svg class="a" style="left:315px;top:182px" width="80" height="64" viewBox="0 0 80 64"><defs><radialGradient id="gg" cx=".350" cy=".250" r=".900"><stop offset="0" stop-color="#fafafa"/><stop offset=".450" stop-color="#dcdcdc"/><stop offset=".750" stop-color="#a8a8a8"/><stop offset="1" stop-color="#8c8c8c"/></radialGradient></defs><circle cx="34.700" cy="32.600" r="24" fill="url(#gg)"/><path d="M12 36Q30 40 38 33L38 40Q28 46 12.500 42Z" fill="#bdbdbd" opacity=".700"/><path d="M13 43Q30 48 40 42V50Q28 53 17 49Z" fill="#9a9a9a" opacity=".700"/><rect x="51.800" y="50" width="6.600" height="7" fill="#d8d8d8"/><path d="M47.500 56.800H63L64 61H46.300Z" fill="#f0f0f0"/><rect x="33.700" y="19.500" width="42.100" height="31.300" rx="1.200" fill="#f2f2f2"/><rect x="36" y="21.800" width="38" height="26.600" fill="#1b1b1b"/><path d="M36 21.800H50Q56 25 55 28.500Q48 35 36 35.500Z" fill="#5a5a5a"/></svg>
<svg class="a" style="left:450px;top:182px" width="80" height="64" viewBox="0 0 80 64"><path d="M39 21.500H46Q50 21.500 48 26L40 37Q38.500 40 41.500 42" stroke="#dcdcdc" stroke-width="2.300" fill="none"/><rect x="17.4" y="8.2" width="21.500" height="15.500" rx="1" fill="#e6e6e6" stroke="#c2c2c2" stroke-width=".600"/><rect x="20.0" y="10.399999999999999" width="16.600" height="10.400" rx=".800" fill="#858585"/><path d="M21.4 19.2L34.4 11.7" stroke="#a9a9a9" stroke-width="3" opacity=".600"/><rect x="24.9" y="23.7" width="6.500" height="2.200" fill="#bdbdbd"/><path d="M17.9 25.9H38.4L39.9 30.8H16.2Z" fill="#e2e2e2" stroke="#bdbdbd" stroke-width=".500"/><rect x="42.1" y="36.9" width="21.500" height="15.500" rx="1" fill="#e6e6e6" stroke="#c2c2c2" stroke-width=".600"/><rect x="44.7" y="39.1" width="16.600" height="10.400" rx=".800" fill="#858585"/><path d="M46.1 47.9L59.1 40.4" stroke="#a9a9a9" stroke-width="3" opacity=".600"/><rect x="49.6" y="52.4" width="6.500" height="2.200" fill="#bdbdbd"/><path d="M42.6 54.599999999999994H63.1L64.6 59.5H40.9Z" fill="#e2e2e2" stroke="#bdbdbd" stroke-width=".500"/><path d="M33.500 53.800L36.500 57.500L41.500 57.500" stroke="#5e5e5e" stroke-width="2.200" fill="none"/><path d="M30.200 57.500A5 5 0 0 1 34 49.600" stroke="#ffc9a3" stroke-opacity=".650" stroke-width="1.400" fill="none"/><path d="M26.500 58.500A8.500 8.500 0 0 1 34 46" stroke="#ffc9a3" stroke-opacity=".650" stroke-width="1.400" fill="none"/><path d="M23.200 59.500A12 12 0 0 1 34 42.500" stroke="#ffc9a3" stroke-opacity=".650" stroke-width="1.400" fill="none"/></svg>
<svg class="a" style="left:582px;top:182px" width="80" height="64" viewBox="0 0 80 64"><defs><linearGradient id="sg" x1="0" y1="0" x2="0" y2="1"><stop offset="0" stop-color="#e6e6e6"/><stop offset="1" stop-color="#a9a9a9"/></linearGradient><linearGradient id="sg2" x1="0" y1="0" x2="0" y2="1"><stop offset="0" stop-color="#ffffff"/><stop offset="1" stop-color="#dadada"/></linearGradient></defs><path d="M17.600 24.500L39.500 10.700Q41 9.800 42.500 10.700L65.500 24.500L59 29.500V25.500Q59 23.200 56.500 23.200H27Q24.500 23.200 24.500 25.500V29.500Z" fill="url(#sg2)"/><path d="M14.200 27.200L41.600 45L68.400 27.200V52.500Q68.400 54.700 66.200 54.700H16.400Q14.200 54.700 14.200 52.500Z" fill="url(#sg)"/><path d="M35.300 27.400H47.400M35.300 31.100H47.400M35.300 34.800H47.400" stroke="#e4c0a4" stroke-width="1.900"/><path d="M16.300 51.600L29.500 41.600M53.200 41.600L65.800 51" stroke="#cf7a3e" stroke-width=".900"/></svg>
<svg class="a" style="left:714px;top:182px" width="80" height="64" viewBox="0 0 80 64"><defs><radialGradient id="wg" cx=".500" cy=".450" r=".600"><stop offset="0" stop-color="#d6d6d6"/><stop offset=".600" stop-color="#a4a4a4"/><stop offset="1" stop-color="#7e7e7e"/></radialGradient><linearGradient id="wb" x1="0" y1="0" x2="0" y2="1"><stop offset="0" stop-color="#ededed"/><stop offset="1" stop-color="#dcdcdc"/></linearGradient></defs><path d="M21 33.700H63.200L67.900 46H16.300Z" fill="#ececec"/><rect x="16.300" y="44.500" width="51.600" height="13" rx="1.500" fill="url(#wb)"/><rect x="19.700" y="47.100" width="43.500" height="4.700" rx="2.300" fill="#1c1c1c"/><path d="M25.8 10Q8.2 23.4 22.1 36.8Q15.9 23.4 25.8 10Z" fill="#8b8b8b"/><path d="M57.4 10Q75.0 23.4 61.1 36.8Q67.3 23.4 57.4 10Z" fill="#8b8b8b"/><path d="M28.6 15.3Q17.2 25.799999999999997 27 36.3Q23.4 25.799999999999997 28.6 15.3Z" fill="#999999"/><path d="M54.6 15.3Q66.0 25.799999999999997 56.2 36.3Q59.8 25.799999999999997 54.6 15.3Z" fill="#999999"/><ellipse cx="41.600" cy="24.200" rx="14.300" ry="15.500" fill="url(#wg)"/></svg>
<svg class="a" style="left:843px;top:182px" width="80" height="64" viewBox="0 0 80 64"><defs><linearGradient id="shg" x1="0" y1="0" x2="0" y2="1"><stop offset="0" stop-color="#fbfbfb"/><stop offset="1" stop-color="#bcbcbc"/></linearGradient></defs><path d="M40.800 11.200Q32 16.800 22 15.600Q20.500 42 40.800 58.600Q61 42 59.700 15.600Q49.500 16.800 40.800 11.200Z" stroke="url(#shg)" stroke-width="2.700" fill="none" stroke-linejoin="round"/><path d="M40.500 17.400Q44.500 19.800 48.400 20.300L28.700 39.800Q26 31 26.600 21.300Q34 21 40.500 17.400Z" fill="url(#shg)"/><path d="M54.700 22.100L32.100 44.700" stroke="#e4e4e4" stroke-width="2.100" stroke-linecap="round"/><path d="M54.300 32.500Q53.500 45 41 53.200L37.400 49.500Z" fill="url(#shg)"/></svg>
<svg class="a" style="left:975px;top:182px" width="80" height="64" viewBox="0 0 80 64"><defs><linearGradient id="wrg" x1="0" y1="0" x2="1" y2="1"><stop offset="0" stop-color="#f2f2f2"/><stop offset="1" stop-color="#d2d2d2"/></linearGradient></defs><path d="M45.300 6.800Q43.800 8.500 44.200 10.500L44.700 15.300Q47 18.500 50.500 17.900Q53.600 17 54.200 15.300L55.300 10.500Q57.800 11.500 57.100 14.200Q57.500 17 56.300 18.900Q55 21.500 52.600 22.600L48.400 24.200L42.100 29.500L33.700 36.300Q31 39 30.500 42.100Q30.500 44.500 29.500 45.800L26.300 50.500L24.200 52.800Q25.300 50 25.300 47.400Q25 45 23.200 43.700Q21 42 18.900 42.100Q16.500 42.800 15.300 44.700Q14.200 47 14.200 49.500Q12.300 47.500 12.600 45.300Q12.600 42.500 13.700 40Q15.500 37.500 17.900 36.300L23.200 35L29.500 30.500L36.300 24.700Q39.500 22 40 20Q39.200 17.500 39.200 14.700Q39.500 11.500 41 9.500Q43 7.200 45.300 6.800Z" fill="url(#wrg)" stroke="#c4c4c4" stroke-width=".400"/><path d="M13.200 10.500L15.800 8.200L21 11.300L21.600 13.700L18.400 16.300L15.800 15.300Z" fill="#efefef" stroke="#d6d6d6" stroke-width=".400"/><path d="M19.300 14.200L37 31" stroke="#d0d0d0" stroke-width="2.900"/><path d="M35.300 32.600L38.900 28.900Q50 36 60.500 45.800Q62.800 48 61.600 50.500Q60.500 53 57.900 54.200Q55 54.800 52.600 53.700Q44 44.500 35.300 32.600Z" fill="#7d8080"/></svg>
<!-- page content -->
<div class="a" style="left:20px;top:309px;width:187px;height:68px;border-radius:5px 5px 0 0;background:linear-gradient(to right,#ff8225,#ffae6c)"></div>
<span class="t" style="left:54.00px;top:325px;font-size:22.5px;font-weight:bold;color:#fff;letter-spacing:-0.105px;transform:scaleY(1.070);transform-origin:0 84.650%;">Состояние</span>
<div class="a" style="left:20px;top:377px;width:1473px;height:924px;background:#f0f0f0;border-radius:0 6px 6px 6px"></div>
<div class="a" style="left:45px;top:402px;width:1421px;height:872px;border:1px solid #55c8ee;background:#fff"></div>
<div class="a" style="left:1447px;top:403px;width:19px;height:872px;background:#f0f0f0;"></div>
<div class="a" style="left:1447px;top:424px;width:19px;height:803px;background:#cdcdcd;"></div>
<svg class="a" style="left:1450px;top:407px" width="13" height="13" viewBox="0 0 13 13"><path d="M2 8.800L6.500 4.300L11 8.800" stroke="#505050" stroke-width="2" fill="none"/></svg>
<svg class="a" style="left:1450px;top:1258px" width="13" height="13" viewBox="0 0 13 13"><path d="M2 4.300L6.500 8.800L11 4.300" stroke="#505050" stroke-width="2" fill="none"/></svg>
<svg class="a" style="left:1007px;top:339px" width="23" height="15" viewBox="0 0 23 15"><path d="M1 0H17L23 5.500V14A1 1 0 0 1 22 15H1A1 1 0 0 1 0 14V1A1 1 0 0 1 1 0Z" fill="#19b5e8"/><text x="10.500" y="11.800" font-family="Liberation Sans" font-weight="bold" font-size="8.300" fill="#fff" text-anchor="middle">SIM</text></svg>
<svg class="a" style="left:1043px;top:338px" width="21" height="15" viewBox="0 0 21 15"><rect width="21" height="15" rx="2.500" fill="#24cdf4"/><path d="M3 3L10.500 7.500L18 3" stroke="#7fe6fb" stroke-width="1.300" fill="none"/><path d="M7 11H14" stroke="#5adcf8" stroke-width="1"/></svg>
<span class="t" style="left:1071.00px;top:342px;font-size:16.25px;color:#555;">2</span>
<svg class="a" style="left:1090px;top:338px" width="22" height="17" viewBox="0 0 22 17"><path d="M0 .300H10L6.500 4.500V16.500H3.500V4.500Z" fill="#19b5e8"/><path d="M2.800 1.700H7.200" stroke="#d8f4fd" stroke-width=".800"/><rect x="7.600" y="10.500" width="2.600" height="6" fill="#19b5e8"/><rect x="11.500" y="7.500" width="2.600" height="9" fill="#19b5e8"/><rect x="15.400" y="5" width="2.600" height="11.500" fill="#19b5e8"/><rect x="19.200" y="2.500" width="2.600" height="14" fill="#19b5e8"/></svg>
<span class="t" style="left:1121.20px;top:342px;font-size:16.25px;color:#555;letter-spacing:-0.122px;">Oris</span>
<span class="t" style="left:1160.80px;top:342px;font-size:16.25px;color:#555;letter-spacing:-0.189px;">4G</span>
<svg class="a" style="left:1192.500px;top:339px" width="15" height="15" viewBox="0 0 15 15"><rect width="15" height="15" rx="3" fill="#19b5e8"/><text x="7.600" y="12.300" font-family="Liberation Sans" font-weight="bold" font-size="13" fill="#fff" text-anchor="middle">R</text></svg>
<svg class="a" style="left:1227px;top:337px" width="20" height="20" viewBox="0 0 20 20"><circle cx="10" cy="10" r="9.600" fill="#24cdf4"/><path d="M10 .500V19.500M.500 10H19.500M1.800 5.500H18.200M1.800 14.500H18.200" stroke="#e8fbff" stroke-width="1"/><ellipse cx="10" cy="10" rx="4.600" ry="9.400" stroke="#e8fbff" stroke-width="1" fill="none"/></svg>
<svg class="a" style="left:1258.500px;top:337.500px" width="27" height="18" viewBox="0 0 27 18"><rect x="1" y="1" width="15.500" height="12" fill="#e4e6e8" stroke="#24cdf4" stroke-width="1.700"/><rect x="6.500" y="13.500" width="4.500" height="2" fill="#24cdf4"/><rect x="3.500" y="15.500" width="10.500" height="2" fill="#24cdf4"/><path d="M18.800 5Q20.300 7.500 18.800 10" stroke="#19b5e8" stroke-width="1.400" fill="none"/><path d="M21 3.500Q23.300 7.500 21 11.500" stroke="#19b5e8" stroke-width="1.400" fill="none"/><path d="M23.300 2Q26.300 7.500 23.300 13" stroke="#19b5e8" stroke-width="1.400" fill="none"/></svg>
<span class="t" style="left:1291.00px;top:342px;font-size:16.25px;color:#555;">1</span>
<svg class="a" style="left:1309px;top:337.500px" width="24" height="19" viewBox="0 0 24 19"><rect x="1" y="1" width="22" height="12.500" fill="#fff" stroke="#19b5e8" stroke-width="1.800"/><path d="M10 3.500V10.500H15" stroke="#19b5e8" stroke-width="1.700" fill="none"/><path d="M5.500 14.300H18.500L15 18.300H9Z" fill="#19b5e8"/></svg>
<div class="a" style="left:1343px;top:339px;width:136px;height:23.500px;border:1px solid #c2c2c2;border-radius:4px;background:linear-gradient(to bottom,#fbfbfb,#e9e9e9 60%,#dcdcdc);box-shadow:0 1px 1px rgba(0,0,0,.120)"></div>
<span class="t" style="left:1386.55px;top:344px;font-size:17.5px;color:#222;letter-spacing:-0.373px;">Выход</span>
<div class="a" style="left:71px;top:428px;width:45px;height:28px;background:linear-gradient(to right,#ff7f1f,#ffb172)"></div><span class="t" style="left:75.60px;top:433px;font-size:18.333px;color:#fff;">LAN</span>
<div class="a" style="left:71px;top:456px;width:660px;height:123px;border:1px solid #a9a9a9;background:#fff"></div>
<span class="t" style="left:191.00px;top:478px;font-size:16.667px;font-weight:bold;color:#474747;letter-spacing:-0.027px;">IPv4 адрес</span><span class="t" style="left:291.20px;top:478px;font-size:16.667px;color:#5a5a5a;letter-spacing:-0.095px;">192.168.0.1</span>
<span class="t" style="left:118.00px;top:511px;font-size:16.667px;font-weight:bold;color:#474747;letter-spacing:-0.050px;">Маска подсети IPv4</span><span class="t" style="left:291.20px;top:511px;font-size:16.667px;color:#5a5a5a;letter-spacing:-0.122px;">255.255.255.0</span>
<span class="t" style="left:155.00px;top:543px;font-size:16.667px;font-weight:bold;color:#474747;letter-spacing:-0.120px;">Номер клиента</span><span class="t" style="left:291.20px;top:543px;font-size:16.667px;color:#5a5a5a;">1</span>
<div class="a" style="left:71px;top:593px;width:157px;height:28px;background:linear-gradient(to right,#ff7f1f,#ffb172)"></div><span class="t" style="left:75.60px;top:598px;font-size:18.333px;color:#fff;">Модем 4G/3G/2G</span>
<div class="a" style="left:71px;top:621px;width:660px;height:369px;border:1px solid #a9a9a9;background:#fff"></div>
<span class="t" style="left:134.00px;top:654px;font-size:16.667px;font-weight:bold;color:#474747;letter-spacing:-0.064px;">Статус SIM карты</span>
<span class="t" style="left:291.20px;top:644px;font-size:16.667px;color:#5a5a5a;">SIM карта</span>
<span class="t" style="left:291.20px;top:665px;font-size:16.667px;color:#5a5a5a;">подключена</span>
<span class="t" style="left:166.00px;top:698px;font-size:16.667px;font-weight:bold;color:#474747;letter-spacing:-0.035px;">Сила сигнала</span>
<div class="a" style="left:290.8px;top:705.8px;width:7.8px;height:4.7px;background:linear-gradient(to right,#00f23c,#00b428);border-right:1px solid #058a24;box-sizing:border-box"></div>
<div class="a" style="left:300.6px;top:701.7px;width:7.8px;height:8.8px;background:linear-gradient(to right,#00f23c,#00b428);border-right:1px solid #058a24;box-sizing:border-box"></div>
<div class="a" style="left:311px;top:699px;width:7.6px;height:11.5px;background:linear-gradient(to right,#00f23c,#00b428);border-right:1px solid #058a24;box-sizing:border-box"></div>
<div class="a" style="left:321px;top:695.3px;width:7.8px;height:15.2px;background:linear-gradient(to right,#00f23c,#00b428);border-right:1px solid #058a24;box-sizing:border-box"></div>
<span class="t" style="left:178.00px;top:732px;font-size:16.667px;font-weight:bold;color:#474747;letter-spacing:-0.013px;">Тип сигнала</span><span class="t" style="left:291.20px;top:732px;font-size:16.667px;color:#5a5a5a;letter-spacing:0.223px;">LTE</span>
<span class="t" style="left:131.00px;top:764px;font-size:16.667px;font-weight:bold;color:#474747;letter-spacing:-0.144px;">Новое сообщение</span><span class="t" style="left:291.20px;top:764px;font-size:16.667px;color:#5a5a5a;">2</span>
<span class="t" style="left:181.07px;top:797px;font-size:16.667px;font-weight:bold;color:#474747;">Статус IPV4</span>
<span class="t" style="left:179.08px;top:817px;font-size:16.667px;font-weight:bold;color:#474747;">соединения</span>
<span class="t" style="left:291.20px;top:797px;font-size:16.667px;color:#5a5a5a;">Соединение</span>
<span class="t" style="left:291.20px;top:817px;font-size:16.667px;color:#5a5a5a;">установлено</span>
<span class="t" style="left:181.07px;top:849px;font-size:16.667px;font-weight:bold;color:#474747;">Статус IPV6</span>
<span class="t" style="left:179.08px;top:869px;font-size:16.667px;font-weight:bold;color:#474747;">соединения</span>
<span class="t" style="left:291.20px;top:859px;font-size:16.667px;color:#5a5a5a;">Отключено</span>
<span class="t" style="left:141.00px;top:902px;font-size:16.667px;font-weight:bold;color:#474747;letter-spacing:-0.123px;">Статус роуминга</span><span class="t" style="left:291.20px;top:902px;font-size:16.667px;color:#5a5a5a;letter-spacing:-0.095px;">Роуминг</span>
<span class="t" style="left:144.75px;top:934px;font-size:16.667px;font-weight:bold;color:#474747;">Информация об</span>
<span class="t" style="left:182.19px;top:954px;font-size:16.667px;font-weight:bold;color:#474747;">операторах</span>
<span class="t" style="left:291.20px;top:944px;font-size:16.667px;color:#5a5a5a;">Oris</span>
<span class="t" style="left:581.00px;top:654px;font-size:16.667px;font-weight:bold;color:#474747;letter-spacing:-0.077px;">RSRP</span><span class="t" style="left:640.00px;top:654px;font-size:16.667px;color:#5a5a5a;letter-spacing:-0.030px;">-92</span>
<span class="t" style="left:587.00px;top:698px;font-size:16.667px;font-weight:bold;color:#474747;letter-spacing:0.045px;">SINR</span><span class="t" style="left:640.00px;top:698px;font-size:16.667px;color:#5a5a5a;letter-spacing:-0.110px;">2.60</span>
<span class="t" style="left:490.00px;top:732px;font-size:16.667px;font-weight:bold;color:#474747;letter-spacing:0.006px;">Режим передачи</span><span class="t" style="left:640.00px;top:732px;font-size:16.667px;color:#5a5a5a;">3</span>
<span class="t" style="left:552.00px;top:764px;font-size:16.667px;font-weight:bold;color:#474747;letter-spacing:-0.118px;">TX Power</span>
<span class="t" style="left:599.00px;top:807px;font-size:16.667px;font-weight:bold;color:#474747;letter-spacing:0.072px;">PCI</span><span class="t" style="left:640.00px;top:807px;font-size:16.667px;color:#5a5a5a;letter-spacing:0.143px;">110</span>
<span class="t" style="left:543.00px;top:859px;font-size:16.667px;font-weight:bold;color:#474747;letter-spacing:-0.030px;">eNodeB ID</span><span class="t" style="left:640.00px;top:859px;font-size:16.667px;color:#5a5a5a;letter-spacing:-0.269px;">20773640</span>
<span class="t" style="left:562.00px;top:902px;font-size:16.667px;font-weight:bold;color:#474747;letter-spacing:0.070px;">CELL ID</span><span class="t" style="left:640.00px;top:902px;font-size:16.667px;color:#5a5a5a;letter-spacing:-0.269px;">20773640</span>
<div class="a" style="left:71px;top:1004.5px;width:84px;height:28.5px;background:linear-gradient(to right,#ff7f1f,#ffb172)"></div><span class="t" style="left:75.60px;top:1010px;font-size:18.333px;color:#fff;">Система</span>
<div class="a" style="left:71px;top:1033px;width:660px;height:57px;border:1px solid #a9a9a9;background:#fff"></div>
<span class="t" style="left:159.00px;top:1055px;font-size:16.667px;font-weight:bold;color:#474747;letter-spacing:-0.072px;">Время работы</span><span class="t" style="left:291.20px;top:1055px;font-size:16.667px;color:#5a5a5a;letter-spacing:-0.110px;">00:38:12</span>
<div class="a" style="left:71px;top:1105px;width:150px;height:28px;background:linear-gradient(to right,#ff7f1f,#ffb172)"></div><span class="t" style="left:75.60px;top:1110px;font-size:18.333px;color:#fff;">Интернет-статус</span>
<div class="a" style="left:71px;top:1133px;width:660px;height:158px;border:1px solid #a9a9a9;background:#fff"></div>
<span class="t" style="left:144.00px;top:1155px;font-size:16.667px;font-weight:bold;color:#474747;letter-spacing:-0.095px;">Общее пособие:</span><span class="t" style="left:291.20px;top:1155px;font-size:16.667px;color:#5a5a5a;letter-spacing:-0.181px;">неограниченный</span>
<span class="t" style="left:150.00px;top:1188px;font-size:16.667px;font-weight:bold;color:#474747;letter-spacing:-0.060px;">Общий трафик:</span><span class="t" style="left:291.20px;top:1188px;font-size:16.667px;color:#5a5a5a;letter-spacing:-0.151px;">229.99KB</span>
<span class="t" style="left:187.00px;top:1220px;font-size:16.667px;font-weight:bold;color:#474747;letter-spacing:-0.030px;">-загрузить:</span><span class="t" style="left:291.20px;top:1220px;font-size:16.667px;color:#5a5a5a;letter-spacing:-0.151px;">139.12KB</span>
<span class="t" style="left:200.00px;top:1253px;font-size:16.667px;font-weight:bold;color:#474747;letter-spacing:0.035px;">-Скачать:</span><span class="t" style="left:291.20px;top:1253px;font-size:16.667px;color:#5a5a5a;letter-spacing:-0.135px;">90.87KB</span>
<div class="a" style="left:746px;top:428px;width:107px;height:28px;background:linear-gradient(to right,#ff7f1f,#ffb172)"></div><span class="t" style="left:750.60px;top:433px;font-size:18.333px;color:#fff;">Тип набора</span>
<div class="a" style="left:746px;top:456px;width:661px;height:58px;border:1px solid #a9a9a9;background:#fff"></div>
<span class="t" style="left:859.80px;top:478px;font-size:16.667px;font-weight:bold;color:#474747;letter-spacing:-0.075px;">Тип набора</span><span class="t" style="left:966.00px;top:478px;font-size:16.667px;color:#5a5a5a;letter-spacing:-0.050px;">Набор номера SIM карты</span>
<div class="a" style="left:746px;top:528px;width:97px;height:28px;background:linear-gradient(to right,#ff7f1f,#ffb172)"></div><span class="t" style="left:750.60px;top:533px;font-size:18.333px;color:#fff;">IPV4 WAN</span>
<div class="a" style="left:746px;top:556px;width:661px;height:155px;border:1px solid #a9a9a9;background:#fff"></div>
<span class="t" style="left:865.80px;top:579px;font-size:16.667px;font-weight:bold;color:#474747;letter-spacing:-0.027px;">IPv4 адрес</span>
<span class="t" style="left:817.80px;top:611px;font-size:16.667px;font-weight:bold;color:#474747;letter-spacing:-0.074px;">Первичный DNS</span>
<span class="t" style="left:818.80px;top:644px;font-size:16.667px;font-weight:bold;color:#474747;letter-spacing:-0.032px;">Вторичный DNS</span>
<span class="t" style="left:796.80px;top:676px;font-size:16.667px;font-weight:bold;color:#474747;letter-spacing:-0.055px;">Время соединения</span>
<div class="a" style="left:746px;top:726px;width:97px;height:28px;background:linear-gradient(to right,#ff7f1f,#ffb172)"></div><span class="t" style="left:750.60px;top:731px;font-size:18.333px;color:#fff;">IPV6 WAN</span>
<div class="a" style="left:746px;top:754px;width:661px;height:155px;border:1px solid #a9a9a9;background:#fff"></div>
<span class="t" style="left:862.80px;top:777px;font-size:16.667px;font-weight:bold;color:#474747;letter-spacing:-0.003px;">Адрес IPv6</span>
<span class="t" style="left:817.80px;top:809px;font-size:16.667px;font-weight:bold;color:#474747;letter-spacing:-0.074px;">Первичный DNS</span>
<span class="t" style="left:818.80px;top:842px;font-size:16.667px;font-weight:bold;color:#474747;letter-spacing:-0.032px;">Вторичный DNS</span>
<span class="t" style="left:796.80px;top:874px;font-size:16.667px;font-weight:bold;color:#474747;letter-spacing:-0.055px;">Время соединения</span>
<div class="a" style="left:746px;top:924px;width:149px;height:28px;background:linear-gradient(to right,#ff7f1f,#ffb172)"></div><span class="t" style="left:750.60px;top:929px;font-size:18.333px;color:#fff;">Мобильная сеть</span>
<div class="a" style="left:746px;top:952px;width:661px;height:155px;border:1px solid #a9a9a9;background:#fff"></div>
<span class="t" style="left:850.80px;top:974px;font-size:16.667px;font-weight:bold;color:#474747;letter-spacing:-0.068px;">IPv4 TX байт</span><span class="t" style="left:966.00px;top:974px;font-size:16.667px;color:#5a5a5a;letter-spacing:-0.269px;">129004</span>
<span class="t" style="left:848.80px;top:1007px;font-size:16.667px;font-weight:bold;color:#474747;letter-spacing:-0.056px;">IPv4 RX байт</span><span class="t" style="left:966.00px;top:1007px;font-size:16.667px;color:#5a5a5a;letter-spacing:-0.269px;">84817</span>
<span class="t" style="left:850.80px;top:1039px;font-size:16.667px;font-weight:bold;color:#474747;letter-spacing:-0.068px;">IPv6 TX байт</span>
<span class="t" style="left:848.80px;top:1072px;font-size:16.667px;font-weight:bold;color:#474747;letter-spacing:-0.056px;">IPv6 RX байт</span>
<div class="a" style="left:20px;top:1276px;width:1473px;height:25px;background:#f0f0f0;border-radius:0 0 6px 6px;"></div>
<div class="a" style="left:45px;top:1275px;width:1423px;height:1px;background:#55c8ee;"></div>
<!-- window border -->
<div class="a" style="left:0px;top:1px;width:1px;height:1334px;background:#0b3b47;"></div>
<div class="a" style="left:1518px;top:1px;width:1px;height:1334px;background:#0b3b47;"></div>
<div class="a" style="left:0px;top:1334px;width:1519px;height:1px;background:#0b3b47;"></div>
</body></html>
